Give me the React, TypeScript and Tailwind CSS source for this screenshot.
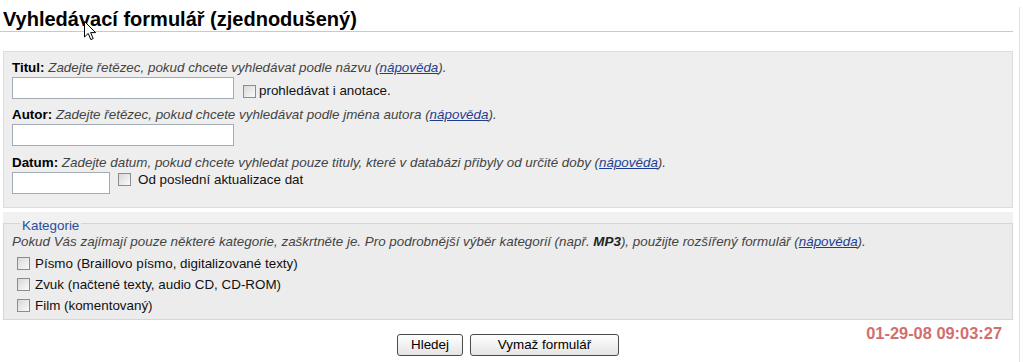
import React from 'react';

function Box({ className = '' }: { className?: string }) {
  return (
    <span
      className={`inline-block w-[13px] h-[13px] border border-[#8c8c8c] bg-gradient-to-br from-[#d8d8d8] to-[#fbfbfb] shrink-0 ${className}`}
    />
  );
}

function Help() {
  return (
    <>
      (<a className="text-[#1d3f91] underline">nápověda</a>).
    </>
  );
}

function Cursor() {
  return (
    <svg className="absolute left-[84px] top-[14px]" width="13" height="20" viewBox="0 0 13 20">
      <path d="M0.5 0.5 L0.5 16 L4.2 12.4 L6.8 18.6 L9.2 17.6 L6.6 11.6 L11.6 11.6 Z" fill="#fff" stroke="#000" strokeWidth="1" />
    </svg>
  );
}

export default function App() {
  return (
    <div className="relative w-[1020px] h-[361px] bg-white border-r border-b border-[#e2e2e2] font-['Liberation_Sans',Arial,sans-serif] text-[13.4px] leading-[16px] text-[#111]">
      {/* Title */}
      <h1 className="mt-[7px] mr-[6px] pl-[3px] text-[20px] leading-[24px] font-bold text-black border-b border-[#c9c9c9]">
        Vyhledávací formulář (zjednodušený)
      </h1>
      <Cursor />

      {/* Basic fields */}
      <div className="ml-[3px] mr-[6px] mt-[19px] border border-[#dedede] bg-[#eeeeee] px-[8px] pt-[7px] pb-[13px]">
        <div className="leading-[17px]">
          <b className="text-black">Titul:</b>{' '}
          <i className="text-[#444]">Zadejte řetězec, pokud chcete vyhledávat podle názvu <Help /></i>
        </div>
        <div className="flex items-start mt-[1px]">
          <input className="w-[222px] h-[22px] border border-[#a3abb6] bg-white" />
          <Box className="ml-[9px] mt-[8px]" />
          <span className="ml-[3px] mt-[6px]">prohledávat i anotace.</span>
        </div>

        <div className="leading-[17px] mt-[7px]">
          <b className="text-black">Autor:</b>{' '}
          <i className="text-[#444]">Zadejte řetězec, pokud chcete vyhledávat podle jména autora <Help /></i>
        </div>
        <div className="flex items-start mt-[1px]">
          <input className="w-[222px] h-[22px] border border-[#a3abb6] bg-white" />
        </div>

        <div className="leading-[17px] mt-[8px]">
          <b className="text-black">Datum:</b>{' '}
          <i className="text-[#444]">
            Zadejte datum, pokud chcete vyhledat pouze tituly, které v databázi přibyly od určité doby <Help />
          </i>
        </div>
        <div className="flex items-start mt-[1px]">
          <input className="w-[98px] h-[22px] border border-[#a3abb6] bg-white" />
          <Box className="ml-[8px] mt-[1px]" />
          <span className="ml-[7px]">Od poslední aktualizace dat</span>
        </div>
      </div>

      {/* Categories */}
      <div className="ml-[3px] mr-[6px] mt-[4px] bg-[#f1f1f1] pt-[1px]">
        <fieldset className="border border-[#d6d6d6] bg-[#ececec] pl-[8px] pb-[3px]">
          <legend className="ml-[8px] px-[2px] pt-[5px] text-[#2b4f9e]">Kategorie</legend>
          <div>
            <i className="text-[#444]">
              Pokud Vás zajímají pouze některé kategorie, zaškrtněte je. Pro podrobnější výběr kategorií (např.{' '}
              <b className="text-[#222]">MP3</b>), použijte rozšířený formulář <Help />
            </i>
          </div>
          <div className="mt-[3px] flex flex-col">
            {[
              'Písmo (Braillovo písmo, digitalizované texty)',
              'Zvuk (načtené texty, audio CD, CD-ROM)',
              'Film (komentovaný)',
            ].map(label => (
              <label key={label} className="h-[21px] flex items-center">
                <Box className="ml-[5px]" />
                <span className="ml-[5px]">{label}</span>
              </label>
            ))}
          </div>
        </fieldset>
      </div>

      {/* Buttons */}
      <div className="ml-[3px] mr-[6px] grid grid-cols-[1fr_auto_1fr] items-start">
        <div />
        <div className="flex gap-[7px] mt-[14px]">
          <button className="w-[66px] h-[22px] rounded-[3px] border border-[#4a4a4a] bg-gradient-to-b from-white to-[#e4e4e4] text-[13.4px] text-black">
            Hledej
          </button>
          <button className="w-[149px] h-[22px] rounded-[3px] border border-[#4a4a4a] bg-gradient-to-b from-white to-[#e4e4e4] text-[13.4px] text-black">
            Vymaž formulář
          </button>
        </div>
        <div className="justify-self-end mt-[3px] pr-[11px] text-[16.4px] leading-[20px] font-bold text-[#d26e6e]">
          01-29-08 09:03:27
        </div>
      </div>
    </div>
  );
}
